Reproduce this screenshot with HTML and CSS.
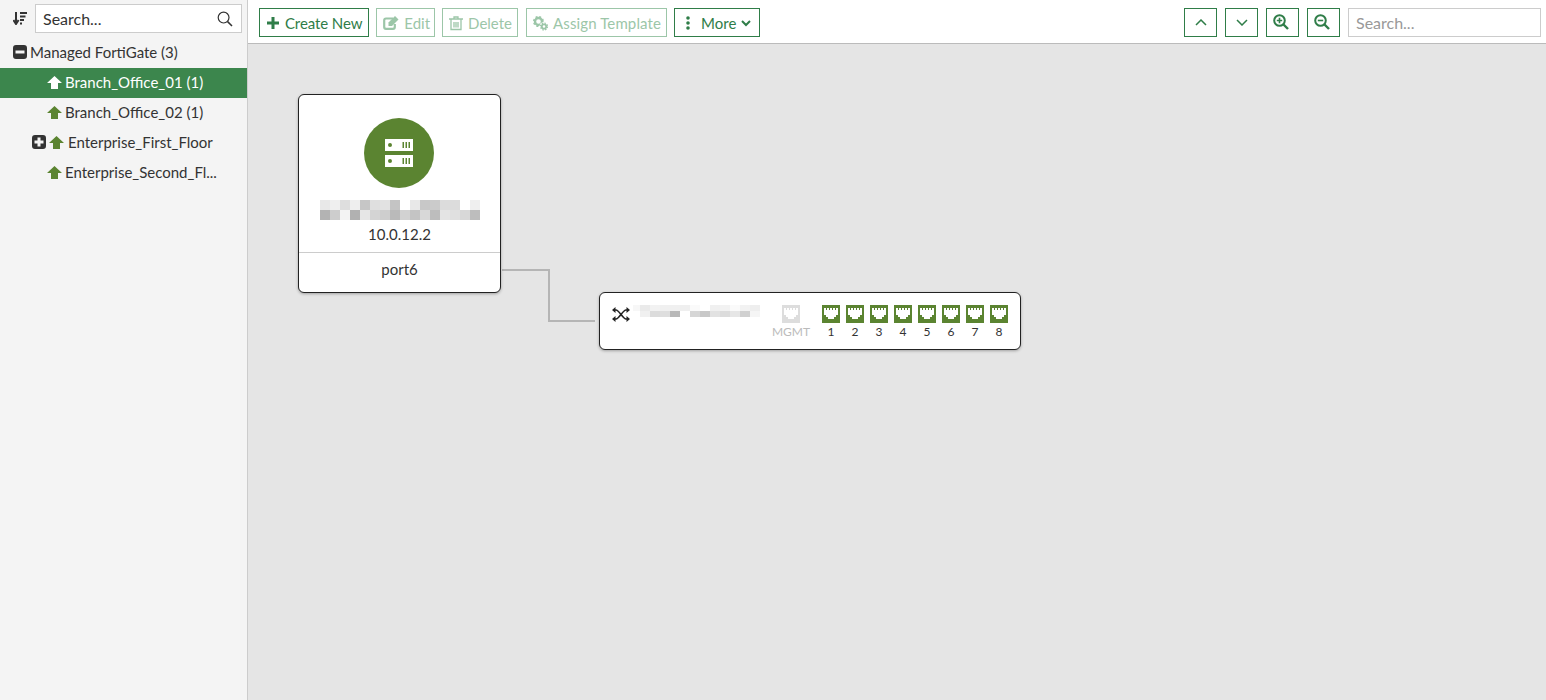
FILE: index.html
```html
<!DOCTYPE html>
<html lang="en">
<head>
  <meta charset="UTF-8">
  <title>Managed FortiGate</title>
  <link rel="stylesheet" href="styles.css">
</head>
<body>
  <svg class="defs">
    <symbol id="up" viewBox="0 0 15 13"><path d="M7.5 0 15 7H11V13H4V7H0Z"/></symbol>
    <symbol id="port" viewBox="0 0 18 18"><path fill-rule="evenodd" d="M0 0H18V18H0ZM2 3V10H4V12H6V14H12V12H14V10H16V3H14V5H13V3H11V5H10V3H8V5H7V3H5V5H4V3Z"/></symbol>
    <symbol id="collapse" viewBox="0 0 14 14"><path fill-rule="evenodd" d="M3 0H11A3 3 0 0 1 14 3V11A3 3 0 0 1 11 14H3A3 3 0 0 1 0 11V3A3 3 0 0 1 3 0ZM2.500 5.500V8.500H11.500V5.500Z"/></symbol>
    <symbol id="expand" viewBox="0 0 14 14"><path fill-rule="evenodd" d="M3 0H11A3 3 0 0 1 14 3V11A3 3 0 0 1 11 14H3A3 3 0 0 1 0 11V3A3 3 0 0 1 3 0ZM5.500 2.500V5.500H2.500V8.500H5.500V11.500H8.500V8.500H11.500V5.500H8.500V2.500Z"/></symbol>
  </svg>

  <aside class="sidebar">
    <div class="tree-search">
      <svg class="sort-icon" viewBox="0 0 14 13"><path d="M3 0V10.500M.4 8 3 12 5.600 8" fill="none" stroke="#333" stroke-width="2"/><path d="M7 1H14M7 4.500H12.500M7 8H11M7 11.500H9" stroke="#333" stroke-width="1.800"/></svg>
      <div class="search-box">
        <span>Search...</span>
        <svg class="lens" viewBox="0 0 16 16"><circle cx="6.6" cy="6.6" r="5.4" fill="none" stroke="#333" stroke-width="1.2"/><path d="M10.6 10.6 15 15" stroke="#333" stroke-width="1.5"/></svg>
      </div>
    </div>
    <ul class="tree">
      <li class="tree-row root"><svg class="toggle"><use href="#collapse"/></svg>Managed FortiGate (3)</li>
      <li class="tree-row child selected"><svg class="up"><use href="#up"/></svg>Branch_Office_01 (1)</li>
      <li class="tree-row child"><svg class="up"><use href="#up"/></svg>Branch_Office_02 (1)</li>
      <li class="tree-row expandable"><svg class="toggle"><use href="#expand"/></svg><svg class="up"><use href="#up"/></svg>Enterprise_First_Floor</li>
      <li class="tree-row child"><svg class="up"><use href="#up"/></svg>Enterprise_Second_Fl...</li>
    </ul>
  </aside>

  <main class="content">
    <header class="toolbar">
      <button class="btn btn-new"><svg viewBox="0 0 12 12"><path d="M4.5 0H7.5V4.5H12V7.5H7.5V12H4.500V7.500H0V4.500H4.500Z" fill="currentColor"/></svg>Create New</button>
      <button class="btn off btn-edit"><svg class="ic-edit" viewBox="0 0 16 14"><path d="M10 2.500H3A1.800 1.800 0 0 0 1.200 4.300V11A1.800 1.800 0 0 0 3 12.800H10A1.800 1.800 0 0 0 11.800 11V8" fill="none" stroke="currentColor" stroke-width="2.200"/><path d="M5.500 6.500 12 0 15.500 3.500 9 10H5.500Z" fill="currentColor"/></svg>Edit</button>
      <button class="btn off btn-delete"><svg class="ic-trash" viewBox="0 0 14 15"><path d="M0 3H14M5 3V1H9V3M2 3V13.500H12V3M5 6V11.500M7 6V11.500M9 6V11.500" fill="none" stroke="currentColor" stroke-width="1.300"/></svg>Delete</button>
      <button class="btn off btn-assign"><svg class="ic-gear" viewBox="0 0 16 15"><circle cx="5.500" cy="5.500" r="3.500" fill="none" stroke="currentColor" stroke-width="2.400"/><circle cx="5.500" cy="5.500" r="4.800" fill="none" stroke="currentColor" stroke-width="1.400" stroke-dasharray="2 1.800"/><circle cx="11" cy="10.500" r="4.500" fill="#fff"/><circle cx="11" cy="10.500" r="2.200" fill="none" stroke="currentColor" stroke-width="1.800"/><circle cx="11" cy="10.500" r="3.500" fill="none" stroke="currentColor" stroke-width="1.200" stroke-dasharray="1.500 1.250"/></svg>Assign Template</button>
      <button class="btn btn-more"><svg class="ic-dots" viewBox="0 0 4 14"><circle cx="2" cy="2" r="1.800" fill="currentColor"/><circle cx="2" cy="7" r="1.800" fill="currentColor"/><circle cx="2" cy="12" r="1.800" fill="currentColor"/></svg>More<svg class="ic-caret" viewBox="0 0 10 7"><path d="M1 1 5 5 9 1" fill="none" stroke="currentColor" stroke-width="2"/></svg></button>
      <div class="toolbar-right">
        <button class="btn square"><svg class="ic-chev" viewBox="0 0 12 7"><path d="M1 6 6 1 11 6" fill="none" stroke="currentColor" stroke-width="1.500"/></svg></button>
        <button class="btn square"><svg class="ic-chev" viewBox="0 0 12 7"><path d="M1 1 6 6 11 1" fill="none" stroke="currentColor" stroke-width="1.500"/></svg></button>
        <button class="btn square zoom-btn"><svg class="ic-zoom" viewBox="0 0 16 16"><circle cx="6.500" cy="6.500" r="5.300" fill="none" stroke="currentColor" stroke-width="2"/><path d="M10.500 10.500 15 15" stroke="currentColor" stroke-width="2.400"/><path d="M3.800 6.500H9.200M6.500 3.800V9.200" stroke="currentColor" stroke-width="1.600"/></svg></button>
        <button class="btn square zoom-btn"><svg class="ic-zoom" viewBox="0 0 16 16"><circle cx="6.500" cy="6.500" r="5.300" fill="none" stroke="currentColor" stroke-width="2"/><path d="M10.500 10.500 15 15" stroke="currentColor" stroke-width="2.400"/><path d="M3.800 6.500H9.200" stroke="currentColor" stroke-width="1.600"/></svg></button>
        <div class="toolbar-search">Search...</div>
      </div>
    </header>

    <section class="canvas">
      <svg class="link" width="110" height="70" viewBox="0 0 110 70"><path d="M7 10H54V61H100" fill="none" stroke="#b5b5b5" stroke-width="2"/></svg>

      <div class="node fgt">
        <div class="node-top">
          <div class="fgt-badge">
            <svg viewBox="0 0 28 28"><path fill-rule="evenodd" d="M0 0H28V12H0ZM5 4A2 2 0 1 0 5.010 8 2 2 0 0 0 5 4ZM17.500 3V9H19V3ZM20.500 3V9H22V3ZM23.500 3V9H25V3ZM0 16H28V28H0ZM5 20A2 2 0 1 0 5.010 24 2 2 0 0 0 5 20ZM17.500 19V25H19V19ZM20.500 19V25H22V19ZM23.500 19V25H25V19Z" fill="#fff"/></svg>
          </div>
          <svg class="blur-name" width="160" height="20" viewBox="0 0 16 2" shape-rendering="crispEdges">
            <g>
              <rect x="0" y="0" width="1" height="1" fill="#e8e8e8"/><rect x="1" y="0" width="1" height="1" fill="#efefef"/><rect x="2" y="0" width="1" height="1" fill="#dedede"/><rect x="3" y="0" width="1" height="1" fill="#eeeeee"/><rect x="4" y="0" width="1" height="1" fill="#c6c6c6"/><rect x="5" y="0" width="1" height="1" fill="#dfdfdf"/><rect x="6" y="0" width="1" height="1" fill="#e2e2e2"/><rect x="7" y="0" width="1" height="1" fill="#c4c4c4"/><rect x="9" y="0" width="1" height="1" fill="#e8e8e8"/><rect x="10" y="0" width="1" height="1" fill="#c8c8c8"/><rect x="11" y="0" width="1" height="1" fill="#cbcbcb"/><rect x="12" y="0" width="1" height="1" fill="#dcdcdc"/><rect x="13" y="0" width="1" height="1" fill="#dcdcdc"/><rect x="15" y="0" width="1" height="1" fill="#efefef"/>
              <rect x="0" y="1" width="1" height="1" fill="#b3b3b3"/><rect x="1" y="1" width="1" height="1" fill="#cdcdcd"/><rect x="2" y="1" width="1" height="1" fill="#f3f3f3"/><rect x="3" y="1" width="1" height="1" fill="#b1b1b1"/><rect x="4" y="1" width="1" height="1" fill="#e6e6e6"/><rect x="5" y="1" width="1" height="1" fill="#d4d4d4"/><rect x="6" y="1" width="1" height="1" fill="#cecece"/><rect x="7" y="1" width="1" height="1" fill="#bababa"/><rect x="8" y="1" width="1" height="1" fill="#d2d2d2"/><rect x="9" y="1" width="1" height="1" fill="#c4c4c4"/><rect x="10" y="1" width="1" height="1" fill="#d8d8d8"/><rect x="11" y="1" width="1" height="1" fill="#bdbdbd"/><rect x="12" y="1" width="1" height="1" fill="#e4e4e4"/><rect x="13" y="1" width="1" height="1" fill="#e0e0e0"/><rect x="14" y="1" width="1" height="1" fill="#d8d8d8"/><rect x="15" y="1" width="1" height="1" fill="#bdbdbd"/>
            </g>
          </svg>
          <div class="fgt-ip">10.0.12.2</div>
        </div>
        <div class="fgt-port">port6</div>
      </div>

      <div class="node switch">
        <div class="switch-id">
          <svg class="ic-shuffle" viewBox="0 0 18 15"><path d="M2 3H4C7 3 11 12 14 12H16M2 12H4C7 12 11 3 14 3H16" fill="none" stroke="#222" stroke-width="1.600"/><path d="M0 3 3.500 0V6ZM0 12 3.500 9V15ZM18 3 14.500 0V6ZM18 12 14.500 9V15Z" fill="#222"/></svg>
          <svg class="blur-switch" width="127" height="12" viewBox="0.3 0 12.7 2" preserveAspectRatio="none" shape-rendering="crispEdges">
            <rect x="0" y="0" width="1" height="1" fill="#f7f7f7"/><rect x="1" y="0" width="1" height="1" fill="#eaeaea"/><rect x="2" y="0" width="1" height="1" fill="#f2f2f2"/><rect x="3" y="0" width="1" height="1" fill="#f0f0f0"/><rect x="4" y="0" width="1" height="1" fill="#f0f0f0"/><rect x="5" y="0" width="1" height="1" fill="#efefef"/><rect x="6" y="0" width="1" height="1" fill="#fafafa"/><rect x="8" y="0" width="1" height="1" fill="#f0f0f0"/><rect x="9" y="0" width="1" height="1" fill="#f2f2f2"/><rect x="10" y="0" width="1" height="1" fill="#fafafa"/><rect x="11" y="0" width="1" height="1" fill="#f2f2f2"/><rect x="12" y="0" width="1" height="1" fill="#eeeeee"/>
            <rect x="1" y="1" width="1" height="1" fill="#f0f0f0"/><rect x="2" y="1" width="1" height="1" fill="#dcdcdc"/><rect x="3" y="1" width="1" height="1" fill="#dedede"/><rect x="4" y="1" width="1" height="1" fill="#b8b8b8"/><rect x="6" y="1" width="1" height="1" fill="#d6d6d6"/><rect x="7" y="1" width="1" height="1" fill="#c8c8c8"/><rect x="8" y="1" width="1" height="1" fill="#e2e2e2"/><rect x="9" y="1" width="1" height="1" fill="#dcdcdc"/><rect x="10" y="1" width="1" height="1" fill="#e6e6e6"/><rect x="11" y="1" width="1" height="1" fill="#d0d0d0"/><rect x="12" y="1" width="1" height="1" fill="#f5f5f5"/>
          </svg>
        </div>
        <div class="ports">
          <div class="port mgmt"><svg><use href="#port"/></svg>MGMT</div>
          <div class="port"><svg><use href="#port"/></svg>1</div>
          <div class="port"><svg><use href="#port"/></svg>2</div>
          <div class="port"><svg><use href="#port"/></svg>3</div>
          <div class="port"><svg><use href="#port"/></svg>4</div>
          <div class="port"><svg><use href="#port"/></svg>5</div>
          <div class="port"><svg><use href="#port"/></svg>6</div>
          <div class="port"><svg><use href="#port"/></svg>7</div>
          <div class="port"><svg><use href="#port"/></svg>8</div>
        </div>
      </div>
    </section>
  </main>
</body>
</html>
```

FILE: styles.css
```css
* {
  box-sizing: border-box;
}
html, body {
  height: 100%;
}
body {
  display: flex;
  margin: 0;
  overflow: hidden;
  font-family: Lato, sans-serif;
  font-size: 15px;
  color: #333;
  background: #fff;
}
.defs {
  display: none;
}

/* left tree */
.sidebar {
  flex: 0 0 248px;
  background: #f4f4f4;
  border-right: 1px solid #ccc;
}
.tree-search {
  display: flex;
  align-items: center;
  gap: 8px;
  padding: 4px 5px 0 13px;
}
.sort-icon {
  width: 14px;
  height: 13px;
  flex: none;
}
.search-box {
  display: flex;
  align-items: center;
  justify-content: space-between;
  flex: 1;
  height: 29px;
  padding: 0 8px 0 7px;
  background: #fff;
  border: 1px solid #ccc;
  font-size: 16px;
}
.lens {
  width: 16px;
  height: 16px;
}
.tree {
  list-style: none;
  margin: 5px 0 0;
  padding: 0;
}
.tree-row {
  display: flex;
  align-items: center;
  height: 30px;
  padding-bottom: 2px;
  white-space: nowrap;
}
.tree-row.root {
  padding-left: 13px;
}
.tree-row.child {
  padding-left: 47px;
}
.tree-row.expandable {
  padding-left: 32px;
}
.tree-row.selected {
  background: #3c864d;
  color: #fff;
}
.toggle {
  width: 14px;
  height: 14px;
  margin-right: 3px;
  fill: #333;
}
.up {
  width: 15px;
  height: 13px;
  margin-right: 3px;
  fill: #5b8431;
}
.expandable .up {
  margin-right: 4px;
}
.selected .up {
  fill: #fff;
}

/* top bar */
.content {
  display: flex;
  flex-direction: column;
  flex: 1;
  min-width: 0;
}
.toolbar {
  display: flex;
  align-items: center;
  gap: 7px;
  flex: 0 0 44px;
  padding: 1px 5px 0 11px;
  border-bottom: 1px solid #bbb;
  background: #fff;
}
.btn {
  display: inline-flex;
  align-items: center;
  gap: 5px;
  height: 29px;
  padding: 2px 6px 0 7px;
  border: 1px solid #2f7d48;
  border-radius: 0;
  background: #fff;
  color: #2f7d48;
  font-family: inherit;
  font-size: 15px;
}
.btn svg {
  width: 12px;
  height: 12px;
  flex: none;
}
.btn.off {
  border-color: #9cc6a8;
  color: #9cc6a8;
}
.btn-new {
  gap: 6px;
  letter-spacing: -0.1px;
}
.btn-edit {
  padding: 2px 4px 0 6px;
}
.btn-delete {
  padding: 2px 5px 0 6px;
}
.btn-assign {
  gap: 4px;
  margin-left: 1px;
  padding: 2px 5px 0 6px;
  letter-spacing: 0.13px;
}
.btn-more {
  padding-right: 8px;
}
.btn .ic-edit {
  width: 16px;
  height: 14px;
}
.btn .ic-trash {
  width: 14px;
  height: 15px;
}
.btn .ic-gear {
  width: 16px;
  height: 15px;
}
.btn .ic-dots {
  width: 4px;
  height: 14px;
  margin: 0 6px 0 4px;
}
.btn .ic-caret {
  width: 10px;
  height: 7px;
}
.toolbar-right {
  display: flex;
  align-items: center;
  gap: 8px;
  margin-left: auto;
}
.btn.square {
  justify-content: center;
  width: 33px;
  padding: 0;
}
.btn.zoom-btn {
  padding-right: 4px;
}
.btn .ic-chev {
  width: 12px;
  height: 7px;
}
.btn .ic-zoom {
  width: 16px;
  height: 16px;
}
.toolbar-search {
  display: flex;
  align-items: center;
  width: 193px;
  height: 29px;
  padding-left: 7px;
  border: 1px solid #ccc;
  color: #999;
  font-size: 16px;
}

/* topology canvas */
.canvas {
  position: relative;
  flex: 1;
  background: #e5e5e5;
}
.link {
  position: absolute;
  left: 247px;
  top: 216px;
}
.node {
  position: absolute;
  background: #fff;
  border: 1px solid #222;
  border-radius: 6px;
  box-shadow: 0 1px 3px rgba(0, 0, 0, 0.3);
}
.fgt {
  left: 50px;
  top: 50px;
  width: 203px;
  height: 199px;
}
.node-top {
  display: flex;
  flex-direction: column;
  align-items: center;
  height: 158px;
  padding-top: 23px;
  border-bottom: 1px solid #ccc;
}
.fgt-badge {
  display: flex;
  align-items: center;
  justify-content: center;
  width: 70px;
  height: 70px;
  margin-right: 1px;
  border-radius: 50%;
  background: #5b8431;
}
.fgt-badge svg {
  width: 28px;
  height: 28px;
}
.blur-name {
  margin-top: 12px;
}
.fgt-ip {
  margin-top: 5px;
  line-height: 18px;
}
.fgt-port {
  padding-top: 7px;
  text-align: center;
  line-height: 18px;
}
.switch {
  display: flex;
  justify-content: space-between;
  left: 351px;
  top: 248px;
  width: 422px;
  height: 58px;
  padding: 12px 12px 0 12px;
}
.switch-id {
  display: flex;
  align-items: flex-start;
  gap: 3px;
}
.ic-shuffle {
  width: 18px;
  height: 15px;
  margin-top: 2px;
}
.ports {
  display: flex;
  gap: 6px;
}
.port {
  display: flex;
  flex-direction: column;
  align-items: center;
  gap: 1px;
  width: 18px;
  font-size: 12px;
  line-height: 15px;
  fill: #5b8431;
}
.port svg {
  width: 18px;
  height: 18px;
  flex: none;
}
.port.mgmt {
  margin-right: 16px;
  color: #bbb;
  fill: #ddd;
}
```
